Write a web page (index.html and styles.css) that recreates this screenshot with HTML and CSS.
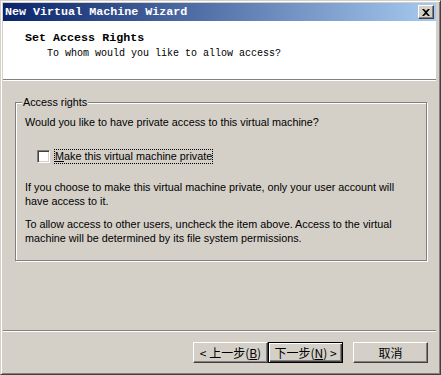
FILE: index.html
```html
<!DOCTYPE html>
<html lang="en">
  <head>
    <meta charset="UTF-8">
    <title>New Virtual Machine Wizard</title>
    <link rel="stylesheet" href="styles.css">
  </head>
  <body>
    <div class="window">
        <div class="titlebar">
            <span class="title">New Virtual Machine Wizard</span>
            <span class="close">
                <svg width="8" height="7" viewBox="0 0 8 7"><path d="M0 0h2l2 2 2-2h2L5 3.5 8 7H6L4 5 2 7H0l3-3.5z"/></svg>
            </span>
        </div>

        <div class="header">
            <div class="step-title">Set Access Rights</div>
            <div class="step-sub">To whom would you like to allow access?</div>
        </div>

        <div class="main">
            <fieldset class="group">
                <legend>Access rights</legend>
                <p class="question">Would you like to have private access to this virtual machine?</p>
                <label class="check-row">
                    <span class="checkbox"></span>
                    <span class="check-label"><u>M</u>ake this virtual machine private</span>
                </label>
                <p class="note">If you choose to make this virtual machine private, only your user account will<br>have access to it.</p>
                <p class="note">To allow access to other users, uncheck the item above. Access to the virtual<br>machine will be determined by its file system permissions.</p>
            </fieldset>
        </div>

        <div class="footer">
            <button class="btn">&lt; 上一步(<u>B</u>)</button>
            <button class="btn default">下一步(<u>N</u>) &gt;</button>
            <button class="btn cancel">取消</button>
        </div>
    </div>
  </body>
</html>
```

FILE: styles.css
```css
body {
    margin: 0;
    padding: 0;
    width: 441px;
    height: 375px;
    overflow: hidden;
    font-family: "Liberation Sans", Arial, sans-serif;
    font-size: 10.8px;
    color: #000;
    background: #d4d0c8;
}

.window {
    width: 441px;
    height: 375px;
    box-sizing: border-box;
    background: #d4d0c8;
    border: 1px solid;
    border-color: #d4d0c8 #404040 #404040 #d4d0c8;
    box-shadow: inset 1px 1px #fff, inset -1px -1px #808080;
    padding: 2px 4px 2px 2px;
    display: flex;
    flex-direction: column;
}

.titlebar {
    height: 18px;
    flex-shrink: 0;
    display: flex;
    align-items: center;
    justify-content: space-between;
    background: linear-gradient(to right, #0a246a, #a6caf0);
    padding-left: 2px;
}

.title {
    font-family: "Liberation Mono", monospace;
    font-weight: 700;
    font-size: 11.7px;
    color: #fff;
    line-height: 18px;
}

.close {
    width: 16px;
    height: 14px;
    box-sizing: border-box;
    margin-right: 2px;
    background: #d4d0c8;
    border: 1px solid;
    border-color: #fff #404040 #404040 #fff;
    box-shadow: inset -1px -1px #808080;
    display: flex;
    align-items: center;
    justify-content: center;
}

.close svg {
    display: block;
    fill: #000;
}

.header {
    height: 59px;
    flex-shrink: 0;
    box-sizing: border-box;
    background: #fff;
    border-bottom: 1px solid #808080;
    padding: 11px 0 0 22px;
    font-family: "Liberation Mono", monospace;
}

.step-title {
    font-weight: 700;
    font-size: 11.7px;
    line-height: 13px;
}

.step-sub {
    font-size: 10px;
    line-height: 13px;
    margin: 2px 0 0 22px;
}

.main {
    flex: 1;
    border-top: 1px solid #fff;
    padding: 14px 9px 0 12px;
}

.group {
    margin: 0;
    padding: 6px 0 15px 9px;
    border: 1px solid #808080;
    box-shadow: inset 1px 1px #fff, 1px 1px #fff;
    min-width: 0;
}

.group legend {
    margin-left: -3px;
    padding: 0 1px;
    line-height: 14px;
    background: #d4d0c8;
}

.question,
.note {
    margin: 0;
    line-height: 14px;
}

.check-row {
    display: flex;
    align-items: center;
    margin: 20px 0 16px 12px;
    height: 15px;
}

.checkbox {
    width: 13px;
    height: 13px;
    box-sizing: border-box;
    background: #fff;
    border: 1px solid;
    border-color: #808080 #fff #fff #808080;
    box-shadow: inset 1px 1px #404040, inset -1px -1px #d4d0c8;
}

.check-label {
    margin-left: 4px;
    border: 1px dotted #000;
    line-height: 13px;
}

.note + .note {
    margin-top: 9px;
}

.footer {
    height: 42px;
    flex-shrink: 0;
    box-sizing: border-box;
    border-top: 1px solid #808080;
    box-shadow: inset 0 1px #fff;
    padding: 11px 8px 0 0;
    display: flex;
    justify-content: flex-end;
    align-items: flex-start;
}

.btn {
    width: 75px;
    height: 21px;
    box-sizing: border-box;
    padding: 0;
    margin: 0;
    font-family: "Noto Sans CJK SC", "Liberation Sans", sans-serif;
    font-size: 12px;
    line-height: 17px;
    color: #000;
    background: #d4d0c8;
    border: 1px solid;
    border-color: #fff #404040 #404040 #fff;
    box-shadow: inset -1px -1px #808080;
}

.btn.default {
    border-color: #000;
    box-shadow: inset 1px 1px #fff, inset -1px -1px #404040, inset -2px -2px #808080;
}

.btn.cancel {
    margin-left: 10px;
}
```
